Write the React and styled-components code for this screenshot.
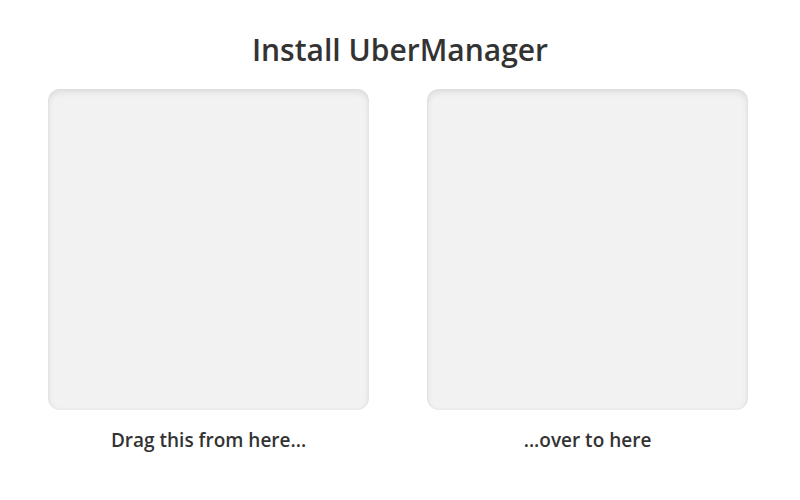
import styled, { createGlobalStyle } from "styled-components";

const Global = createGlobalStyle`
  html, body {
    margin: 0;
    padding: 0;
    background: #fff;
  }
  body {
    font-family: "Open Sans", "Noto Sans", sans-serif;
    color: #333;
  }
`;

const Page = styled.div`
  width: 800px;
  height: 500px;
  box-sizing: border-box;
  padding: 30px 48px 0;
  display: flex;
  flex-direction: column;
  align-items: center;
`;

const Title = styled.h1`
  margin: 0;
  font-size: 30px;
  line-height: 40px;
  font-weight: 600;
  color: #333;
`;

const Columns = styled.div`
  margin-top: 19px;
  width: 100%;
  display: flex;
  gap: 58px;
`;

const Column = styled.div`
  display: flex;
  flex-direction: column;
  align-items: center;
`;

const Well = styled.div`
  width: 321px;
  height: 321px;
  border-radius: 12px;
  background: #f2f2f2;
  box-shadow: inset 0 3px 7px rgba(0, 0, 0, 0.09), inset 0 0 3px rgba(0, 0, 0, 0.06);
`;

const Caption = styled.div`
  margin-top: 18px;
  font-size: 19px;
  line-height: 24px;
  font-weight: 600;
  color: #333;
`;

export default function App() {
  return (
    <>
      <Global />
      <Page>
        <Title>Install UberManager</Title>
        <Columns>
          <Column>
            <Well />
            <Caption>Drag this from here...</Caption>
          </Column>
          <Column>
            <Well />
            <Caption>...over to here</Caption>
          </Column>
        </Columns>
      </Page>
    </>
  );
}
